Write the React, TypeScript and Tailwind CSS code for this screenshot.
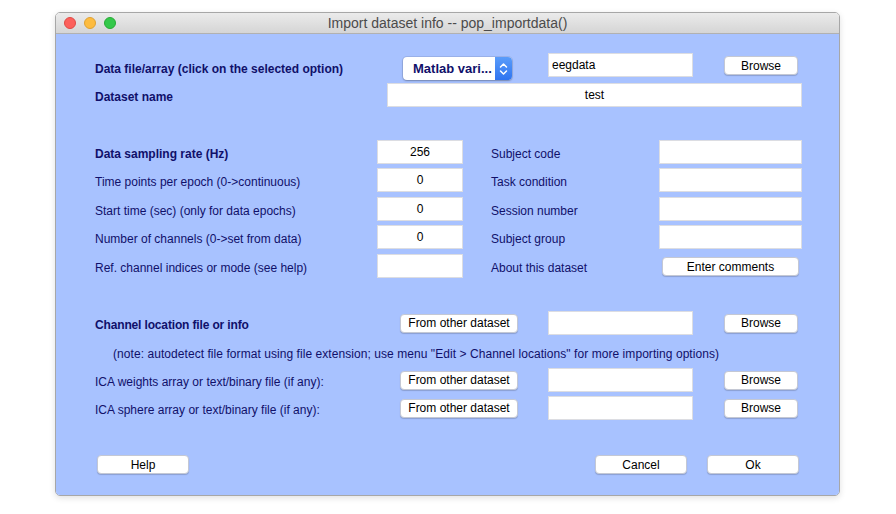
import React from 'react';

const navy = 'text-[#10106a]';

function Btn({ label, w }: { label: string; w: string }) {
  return (
    <div
      className={`${w} h-[19px] shrink-0 bg-white rounded-[4px] border border-[#c4c8d4] shadow-[0_1px_1px_rgba(0,0,0,0.18)] flex items-center justify-center text-[12px] text-black leading-none`}
    >
      {label}
    </div>
  );
}

function Field({ value = '', w, align = 'center' }: { value?: string; w: string; align?: 'center' | 'left' }) {
  return (
    <div
      className={`${w} h-[24px] shrink-0 bg-white border border-[#dcdde2] flex items-center text-[12px] text-black ${
        align === 'center' ? 'justify-center' : 'justify-start pl-[3px]'
      }`}
    >
      {value}
    </div>
  );
}

function PopupMenu() {
  return (
    <div className="w-[109px] h-[23px] mt-[4px] shrink-0 flex rounded-[4px] bg-white shadow-[0_0_0_1px_rgba(0,0,0,0.08),0_1px_2px_rgba(0,0,0,0.25)] overflow-hidden">
      <div className={`flex-1 flex items-center pl-[10px] text-[13px] font-bold ${navy}`}>Matlab vari...</div>
      <div className="w-[17px] bg-gradient-to-b from-[#5a9cfa] to-[#2f74f0] flex items-center justify-center">
        <svg width="9" height="14" viewBox="0 0 9 14" fill="none" stroke="white" strokeWidth="1.5" strokeLinecap="round" strokeLinejoin="round">
          <path d="M1.5 5 L4.5 2 L7.5 5" />
          <path d="M1.5 9 L4.5 12 L7.5 9" />
        </svg>
      </div>
    </div>
  );
}

const leftRows = [
  { label: 'Data sampling rate (Hz)', value: '256', bold: true, right: 'Subject code', mt: 'mt-[33px]' },
  { label: 'Time points per epoch (0->continuous)', value: '0', right: 'Task condition', mt: 'mt-[4px]' },
  { label: 'Start time (sec) (only for data epochs)', value: '0', right: 'Session number', mt: 'mt-[5px]' },
  { label: 'Number of channels (0->set from data)', value: '0', right: 'Subject group', mt: 'mt-[4px]' },
  { label: 'Ref. channel indices or mode (see help)', value: '', right: 'About this dataset', mt: 'mt-[5px]', comments: true },
];

export default function App() {
  return (
    <div className="min-h-screen bg-white font-['Liberation_Sans',Arial,sans-serif]">
      <div className="pt-[12px] pl-[55px]">
        <div className="w-[785px] rounded-[5px] border border-[#a7a7a7] overflow-hidden shadow-[0_2px_6px_rgba(0,0,0,0.12)]">
          {/* title bar */}
          <div className="h-[21px] bg-gradient-to-b from-[#ebebeb] to-[#d5d5d5] border-b border-[#b1b1b1] flex items-center">
            <div className="flex gap-[8px] pl-[8px]">
              <span className="w-[12px] h-[12px] rounded-full bg-[#fc605c] border border-[#de4a45]" />
              <span className="w-[12px] h-[12px] rounded-full bg-[#fdbc40] border border-[#dea133]" />
              <span className="w-[12px] h-[12px] rounded-full bg-[#34c84a] border border-[#27aa35]" />
            </div>
            <div className="flex-1 text-center text-[14px] text-[#4b4b4b] -ml-[60px]">Import dataset info -- pop_importdata()</div>
          </div>

          {/* content */}
          <div className={`bg-[#a8c2ff] h-[461px] pl-[39px] pt-[19px] text-[12px] ${navy}`}>
            {/* data file row */}
            <div className="flex items-start h-[27px]">
              <div className="w-[308px] mt-[8px] leading-[16px] font-bold">Data file/array (click on the selected option)</div>
              <PopupMenu />
              <div className="ml-[36px]">
                <Field value="eegdata" w="w-[145px]" align="left" />
              </div>
              <div className="ml-[31px] mt-[3px]">
                <Btn label="Browse" w="w-[74px]" />
              </div>
            </div>

            {/* dataset name */}
            <div className="flex items-center h-[24px] mt-[3px]">
              <div className="w-[292px] leading-[16px] font-bold mt-[4px]">Dataset name</div>
              <Field value="test" w="w-[415px]" />
            </div>

            {/* parameter grid */}
            {leftRows.map((r) => (
              <div key={r.label} className={`flex items-center h-[24px] ${r.mt}`}>
                <div className={`w-[282px] leading-[16px] mt-[3px] ${r.bold ? 'font-bold' : ''}`}>{r.label}</div>
                <Field value={r.value} w="w-[86px]" />
                <div className="w-[28px]" />
                <div className="w-[168px] leading-[16px] mt-[3px]">{r.right}</div>
                {r.comments ? (
                  <div className="ml-[3px] mt-[1px]">
                    <Btn label="Enter comments" w="w-[137px]" />
                  </div>
                ) : (
                  <Field w="w-[143px]" />
                )}
              </div>
            ))}

            {/* channel location */}
            <div className="flex items-center h-[24px] mt-[33px]">
              <div className="w-[305px] leading-[16px] font-bold mt-[4px] tracking-[-0.15px]">Channel location file or info</div>
              <Btn label="From other dataset" w="w-[118px]" />
              <div className="ml-[30px]">
                <Field w="w-[145px]" />
              </div>
              <div className="ml-[31px]">
                <Btn label="Browse" w="w-[74px]" />
              </div>
            </div>

            <div className="h-[16px] mt-[11px] pl-[18px] leading-[16px] tracking-[0.06px]">
              (note: autodetect file format using file extension; use menu "Edit &gt; Channel locations" for more importing options)
            </div>

            {[
              { label: 'ICA weights array or text/binary file (if any):', mt: 'mt-[6px]' },
              { label: 'ICA sphere array or text/binary file (if any):', mt: 'mt-[4px]' },
            ].map((r) => (
              <div key={r.label} className={`flex items-center h-[24px] ${r.mt}`}>
                <div className="w-[305px] leading-[16px] mt-[3px]">{r.label}</div>
                <Btn label="From other dataset" w="w-[118px]" />
                <div className="ml-[30px]">
                  <Field w="w-[145px]" />
                </div>
                <div className="ml-[31px]">
                  <Btn label="Browse" w="w-[74px]" />
                </div>
              </div>
            ))}

            {/* bottom buttons */}
            <div className="flex items-center mt-[35px] pl-[2px]">
              <Btn label="Help" w="w-[92px]" />
              <div className="w-[406px]" />
              <Btn label="Cancel" w="w-[92px]" />
              <div className="w-[20px]" />
              <Btn label="Ok" w="w-[92px]" />
            </div>
          </div>
        </div>
      </div>
    </div>
  );
}
